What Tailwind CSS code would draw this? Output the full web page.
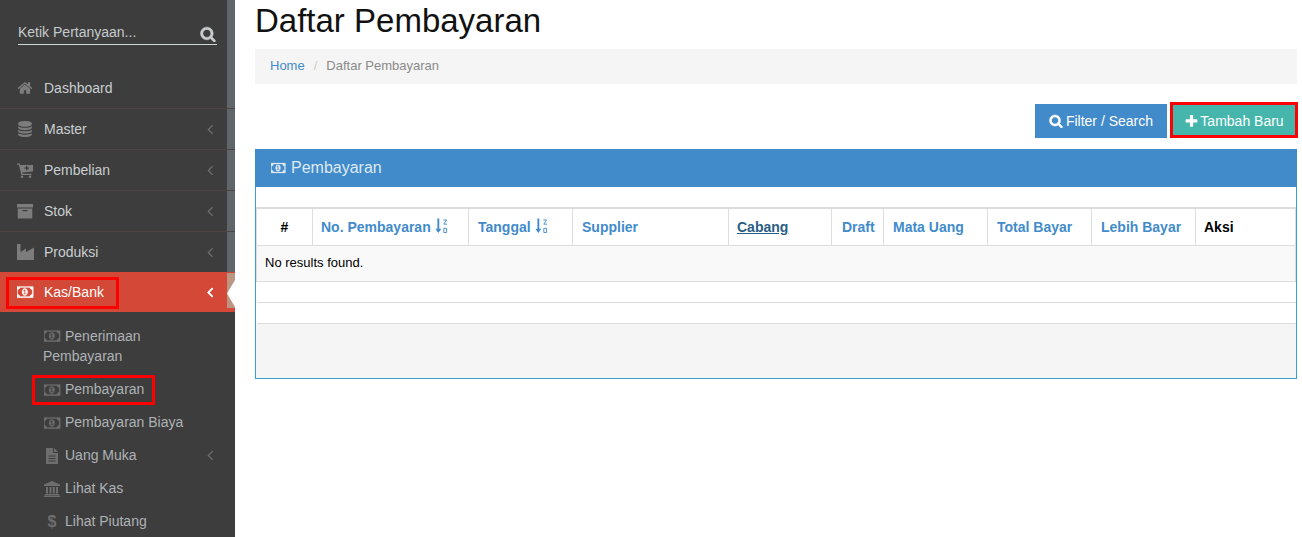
<!DOCTYPE html>
<html>
<head>
<meta charset="utf-8">
<script src="https://cdn.jsdelivr.net/npm/@tailwindcss/browser@4"></script>
</head>
<body class="bg-white font-['Liberation_Sans',Arial,sans-serif] text-[14px] text-black">
<svg width="0" height="0" class="absolute">
  <defs>
    <symbol id="money" viewBox="0 0 2048 1792"><path fill="currentColor" stroke="currentColor" stroke-width="30" d="M704 1152h384v-96h-128v-448h-114l-148 137 77 80q42-37 55-57h2v288h-128v96zm512-256q0 70-21 142t-59.500 134-101.500 101-138 39-138-39-101.500-101-59.500-134-21-142 21-142 59.500-134 101.500-101 138-39 138 39 101.500 101 59.500 134 21 142zm512 256v-512q-106 0-181-75t-75-181h-1152q0 106-75 181t-181 75v512q106 0 181 75t75 181h1152q0-106 75-181t181-75zm128-832v1152q0 26-19 45t-45 19h-1792q-26 0-45-19t-19-45v-1152q0-26 19-45t45-19h1792q26 0 45 19t19 45z"/></symbol>
    <symbol id="search" viewBox="0 0 1792 1792"><path fill="currentColor" stroke="currentColor" stroke-width="70" d="M1216 832q0-185-131.500-316.500t-316.500-131.500-316.500 131.500-131.500 316.500 131.500 316.500 316.500 131.500 316.500-131.500 131.500-316.500zm512 832q0 52-38 90t-90 38q-54 0-90-38l-343-342q-179 124-399 124-143 0-273.500-55.500t-225-150-150-225-55.500-273.500 55.500-273.500 150-225 225-150 273.500-55.500 273.500 55.500 225 150 150 225 55.500 273.500q0 220-124 399l343 343q37 37 37 90z"/></symbol>
    <symbol id="chev" viewBox="0 0 8 12"><path fill="none" stroke="currentColor" stroke-width="1.400" d="M6.500 1 1.500 6l5 5"/></symbol>
    <symbol id="sort" viewBox="0 0 14 16"><path fill="currentColor" d="M2.600 0h2v11h2.200L3.600 15.500.4 11h2.200z"/><path fill="none" stroke="currentColor" stroke-width="1" d="M9 1.500h3.500L9.500 6h3.500M9.500 10.500h3v4.500h-3z"/></symbol>
  </defs>
</svg>
<div class="relative flex h-[537px] w-[1302px] overflow-hidden">
  <aside class="relative w-[235px] shrink-0 overflow-hidden bg-[#3d3d3d] text-[#c9ced1]">
    <div class="absolute right-0 top-0 h-[272px] w-[8px] bg-[#5f6568]"></div>
    <div class="relative px-[18px] pt-[22px]">
      <div class="flex h-[23px] items-center justify-between border-b border-[#cfd8d4] pb-[2px] pr-[1px]">
        <span class="text-[#c5cacc]">Ketik Pertanyaan...</span>
        <svg class="mt-[4px] h-[16px] w-[16px] text-[#c9ced1]"><use href="#search"/></svg>
      </div>
    </div>
    <nav class="relative mt-[23px]">
      <a class="flex h-[41px] items-center border-b border-[#4e4444] pl-[17px] pr-[21px]">
        <svg class="h-[16px] w-[16px] text-[#7c7c7c]" viewBox="0 0 1792 1792"><path fill="currentColor" d="M1472 992v480q0 26-19 45t-45 19h-384v-384h-256v384h-384q-26 0-45-19t-19-45v-480q0-1 .5-3t.5-3l575-474 575 474q1 2 1 6zm223-69l-62 74q-8 9-21 11h-3q-13 0-21-7l-692-577-692 577q-12 8-24 7-13-2-21-11l-62-74q-8-10-7-23.500t11-21.500l719-599q32-26 76-26t76 26l244 204v-195q0-14 9-23t23-9h192q14 0 23 9t9 23v408l219 182q10 8 11 21.500t-7 23.500z"/></svg>
        <span class="ml-[11px]">Dashboard</span>
      </a>
      <a class="flex h-[41px] items-center border-b border-[#4e4444] pl-[17px] pr-[21px]">
        <svg class="h-[16px] w-[16px] text-[#7c7c7c]" viewBox="0 0 1792 1792"><path fill="currentColor" d="M896 768q237 0 443-43t325-127v170q0 69-103 128t-280 93.500-385 34.500-385-34.500-280-93.500-103-128v-170q119 84 325 127t443 43zm0 768q237 0 443-43t325-127v170q0 69-103 128t-280 93.500-385 34.500-385-34.500-280-93.500-103-128v-170q119 84 325 127t443 43zm0-384q237 0 443-43t325-127v170q0 69-103 128t-280 93.500-385 34.500-385-34.500-280-93.500-103-128v-170q119 84 325 127t443 43zm0-1152q208 0 385 34.500t280 93.500 103 128v128q0 69-103 128t-280 93.500-385 34.500-385-34.500-280-93.500-103-128v-128q0-69 103-128t280-93.500 385-34.500z"/></svg>
        <span class="ml-[11px] flex-1">Master</span>
        <svg class="h-[11px] w-[7px] text-[#6f6f6f]"><use href="#chev"/></svg>
      </a>
      <a class="flex h-[41px] items-center border-b border-[#4e4444] pl-[17px] pr-[21px]">
        <svg class="h-[16px] w-[16px] text-[#7c7c7c]" viewBox="0 0 16 16"><path fill="currentColor" d="M0 1.500h2.800l.5 1.500H16v6.500l-10.800 1 .3 1.200H14.500v1.300H4.300L2 2.800H0z"/><circle cx="5" cy="14.800" r="1.200" fill="currentColor"/><circle cx="13" cy="14.800" r="1.200" fill="currentColor"/><path fill="#3d3d3d" d="M9 4h1.400v1.500H12v1.300h-1.600v1.500H9V6.800H7.500V5.500H9z"/></svg>
        <span class="ml-[11px] flex-1">Pembelian</span>
        <svg class="h-[11px] w-[7px] text-[#6f6f6f]"><use href="#chev"/></svg>
      </a>
      <a class="flex h-[41px] items-center border-b border-[#4e4444] pl-[17px] pr-[21px]">
        <svg class="h-[16px] w-[16px] text-[#7c7c7c]" viewBox="0 0 16 16"><path fill="currentColor" d="M0 1h16v3.500H0zM.7 5.500h14.600V15.500H.7z"/><rect x="5.500" y="7" width="5" height="1.200" fill="#3d3d3d"/></svg>
        <span class="ml-[11px] flex-1">Stok</span>
        <svg class="h-[11px] w-[7px] text-[#6f6f6f]"><use href="#chev"/></svg>
      </a>
      <a class="flex h-[40px] items-center pl-[17px] pr-[21px]">
        <svg class="h-[16px] w-[17px] text-[#7c7c7c]" viewBox="0 0 17 16"><path fill="currentColor" d="M0 0h3.500v8L9 4.500v3.500l8-4.500V16H0z"/></svg>
        <span class="ml-[10px] flex-1">Produksi</span>
        <svg class="h-[11px] w-[7px] text-[#6f6f6f]"><use href="#chev"/></svg>
      </a>
      <a class="flex h-[40px] items-center bg-[#d34836] pl-[17px] pr-[21px] text-white">
        <svg class="h-[16px] w-[18px]"><use href="#money"/></svg>
        <span class="ml-[9px] flex-1">Kas/Bank</span>
        <svg class="h-[11px] w-[7px] text-white" viewBox="0 0 8 12"><path fill="none" stroke="currentColor" stroke-width="2.200" d="M6.500 1 1.500 6l5 5"/></svg>
      </a>
      <div class="absolute left-[227px] top-[205px] h-[35px] w-[8px] bg-[repeating-conic-gradient(#d08f7c_0_25%,#a89c88_0_50%)] bg-[length:2px_2px]"></div>
      <div class="absolute left-[227px] top-[212px] h-[27px] w-[8px] bg-white [clip-path:polygon(100%_0,100%_100%,0_50%)]"></div>
      <ul class="pt-[14px] text-[#aeb2b5]">
        <li class="pb-[7px] pl-[43px] pr-[21px] leading-[20px]">
          <svg class="ml-[1px] mr-[3px] inline-block h-[16px] w-[18px] align-[-3px] text-[#6e6e6e]"><use href="#money"/></svg>Penerimaan Pembayaran
        </li>
        <li class="flex h-[33px] items-center pl-[44px] pr-[21px]">
          <svg class="h-[16px] w-[18px] text-[#6e6e6e]"><use href="#money"/></svg><span class="ml-[3px]">Pembayaran</span>
        </li>
        <li class="flex h-[33px] items-center pl-[44px] pr-[21px]">
          <svg class="h-[16px] w-[18px] text-[#6e6e6e]"><use href="#money"/></svg><span class="ml-[3px]">Pembayaran Biaya</span>
        </li>
        <li class="flex h-[33px] items-center pl-[44px] pr-[21px]">
          <svg class="h-[16px] w-[18px] text-[#6e6e6e]" viewBox="1 0 18 16"><path fill="currentColor" d="M3 0h7v5h5v11H3zM11 0l4 4h-4z"/><path stroke="#3d3d3d" stroke-width="1" d="M5.500 8h7M5.500 10.500h7M5.500 13h7"/></svg>
          <span class="ml-[3px] flex-1">Uang Muka</span>
          <svg class="h-[11px] w-[7px] text-[#6f6f6f]"><use href="#chev"/></svg>
        </li>
        <li class="flex h-[33px] items-center pl-[44px] pr-[21px]">
          <svg class="h-[16px] w-[18px] text-[#6e6e6e]" viewBox="1 0 18 16"><path fill="currentColor" d="M9 0l8 3.500V5H1V3.500zM3 6h2v6.500H3zM6.500 6h2v6.500h-2zM9.800 6h2v6.500h-2zM13 6h2v6.500h-2zM2 13h14v1H2zM1 14.500h16V16H1z"/></svg>
          <span class="ml-[3px]">Lihat Kas</span>
        </li>
        <li class="flex h-[33px] items-center pl-[44px] pr-[21px]">
          <span class="w-[16px] text-center text-[16px] font-bold leading-none text-[#6e6e6e]">$</span>
          <span class="ml-[5px]">Lihat Piutang</span>
        </li>
      </ul>
    </nav>
  </aside>
  <main class="w-[1067px] pl-[20px] pr-[5px]">
    <h1 class="h-[49px] text-[33px] leading-[41px] text-[#111]">Daftar Pembayaran</h1>
    <div class="flex h-[35px] items-center bg-[#f5f5f5] px-[15px] pb-[2px] text-[13px] text-[#8a8a8a]">
      <a class="text-[#428bca]">Home</a><span class="pl-[9px] pr-[9px] text-[#ccc]">/</span><span>Daftar Pembayaran</span>
    </div>
    <div class="mt-[20px] flex h-[34px] justify-end gap-[5px] pr-[1px]">
      <button class="flex w-[132px] items-center justify-center gap-[3px] bg-[#428bca] text-white">
        <svg class="h-[14px] w-[14px]"><use href="#search"/></svg>Filter / Search
      </button>
      <button class="flex w-[124px] items-center justify-center gap-[1px] bg-[#46b6ac] text-white">
        <svg class="h-[15px] w-[15px]" viewBox="0 0 1792 1792"><path fill="currentColor" d="M1600 736v192q0 40-28 68t-68 28h-416v416q0 40-28 68t-68 28h-192q-40 0-68-28t-28-68v-416h-416q-40 0-68-28t-28-68v-192q0-40 28-68t68-28h416v-416q0-40 28-68t68-28h192q40 0 68 28t28 68v416h416q40 0 68 28t28 68z"/></svg>Tambah Baru
      </button>
    </div>
    <section class="mt-[11px] h-[230px] border border-t-0 border-[#3c9fc9]">
      <div class="-mx-px flex h-[38px] items-center gap-[4px] bg-[#428bca] px-[16px] text-[16px] text-[#dfe9f2]">
        <svg class="h-[14px] w-[16px]"><use href="#money"/></svg>Pembayaran
      </div>
      <table class="mt-[20px] w-full table-fixed border-t-2 border-[#ddd] text-[14px]">
        <thead>
          <tr class="h-[37px] text-[#428bca] [&>th]:border-x [&>th]:border-b [&>th]:border-[#ddd] [&>th]:px-[9px] [&>th]:pt-[2px] [&>th]:text-left [&>th]:font-bold">
            <th class="w-[56px] !text-center text-black">#</th>
            <th class="w-[156px] whitespace-nowrap !pl-[8px]">No. Pembayaran <svg class="inline h-[16px] w-[13px] align-[-2px]"><use href="#sort"/></svg></th>
            <th class="w-[104px] whitespace-nowrap">Tanggal <svg class="inline h-[16px] w-[13px] align-[-2px]"><use href="#sort"/></svg></th>
            <th class="w-[156px]">Supplier</th>
            <th class="w-[103px] !pl-[8px] text-[#2a5d84] underline">Cabang</th>
            <th class="w-[52px] !pl-[10px]">Draft</th>
            <th class="w-[104px]">Mata Uang</th>
            <th class="w-[104px]">Total Bayar</th>
            <th class="w-[104px]">Lebih Bayar</th>
            <th class="!pl-[8px] text-black">Aksi</th>
          </tr>
        </thead>
        <tbody>
          <tr class="h-[36px] bg-[#f9f9f9]"><td colspan="10" class="border-x border-b border-[#ddd] px-[8px] text-[13px]">No results found.</td></tr>
          <tr class="h-[21px]"><td colspan="10" class="border-b border-[#ddd]"></td></tr>
          <tr class="h-[21px]"><td colspan="10" class="border-b border-[#ddd]"></td></tr>
        </tbody>
      </table>
      <div class="h-[54px] bg-[#f5f5f5]"></div>
    </section>
  </main>
  <div class="pointer-events-none absolute left-[6px] top-[277px] h-[32px] w-[113px] border-[3px] border-[#ff0000]"></div>
  <div class="pointer-events-none absolute left-[32px] top-[375px] h-[30px] w-[123px] border-[3px] border-[#ff0000]"></div>
  <div class="pointer-events-none absolute left-[1170px] top-[102px] h-[36px] w-[128px] border-[3px] border-[#ff0000]"></div>
</div>
</body>
</html>
